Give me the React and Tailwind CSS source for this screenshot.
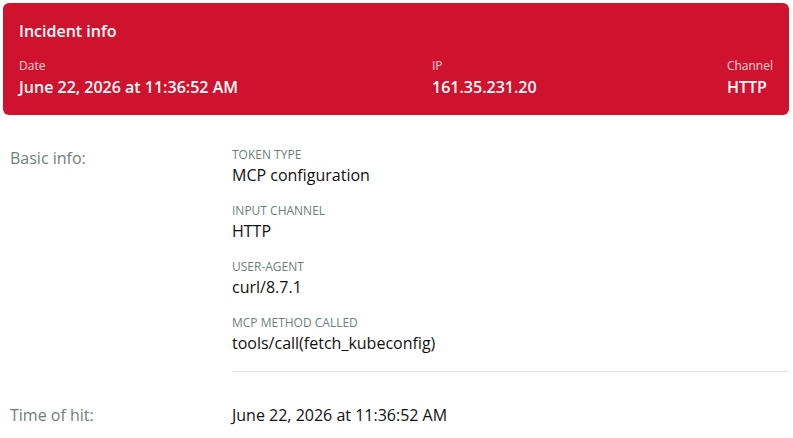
export default function App() {
  const font = { fontFamily: '"Open Sans", "Noto Sans", sans-serif' };
  const fields = [
    ["TOKEN TYPE", "MCP configuration"],
    ["INPUT CHANNEL", "HTTP"],
    ["USER-AGENT", "curl/8.7.1"],
    ["MCP METHOD CALLED", "tools/call(fetch_kubeconfig)"],
  ];
  return (
    <div className="w-[793px] h-[438px] bg-white overflow-hidden" style={font}>
      <div className="mx-[3px] mt-[3px] w-[786px] rounded-md bg-[#cf122e] px-4 pt-4 pb-4 text-white">
        <div className="text-base leading-6 font-semibold">Incident info</div>
        <div className="mt-[15px] flex justify-between">
          <div className="w-[413px]">
            <div className="text-xs leading-4 text-white/80">Date</div>
            <div className="mt-px text-base leading-6 font-semibold">June 22, 2026 at 11:36:52 AM</div>
          </div>
          <div className="flex-1">
            <div className="text-xs leading-4 text-white/80">IP</div>
            <div className="mt-px text-base leading-6 font-semibold">161.35.231.20</div>
          </div>
          <div>
            <div className="text-xs leading-4 text-white/80">Channel</div>
            <div className="mt-px text-base leading-6 font-semibold">HTTP</div>
          </div>
        </div>
      </div>

      <div className="mt-8 flex pl-[10px] pr-[4px]">
        <div className="w-[222px] shrink-0 text-base leading-[22px] text-[#6e7f7b]">Basic info:</div>
        <div className="flex-1">
          <div className="flex flex-col gap-4 border-b border-[#e2e4e4] pb-4">
            {fields.map(([k, v]) => (
              <div key={k}>
                <div className="text-xs leading-4 uppercase text-[#6e7f7b]">{k}</div>
                <div className="text-base leading-6 text-[#111]">{v}</div>
              </div>
            ))}
          </div>
        </div>
      </div>

      <div className="mt-[31px] flex items-center pl-[10px]">
        <div className="w-[222px] shrink-0 text-base leading-6 text-[#6e7f7b]">Time of hit:</div>
        <div className="text-base leading-6 text-[#111]">June 22, 2026 at 11:36:52 AM</div>
      </div>
    </div>
  );
}
